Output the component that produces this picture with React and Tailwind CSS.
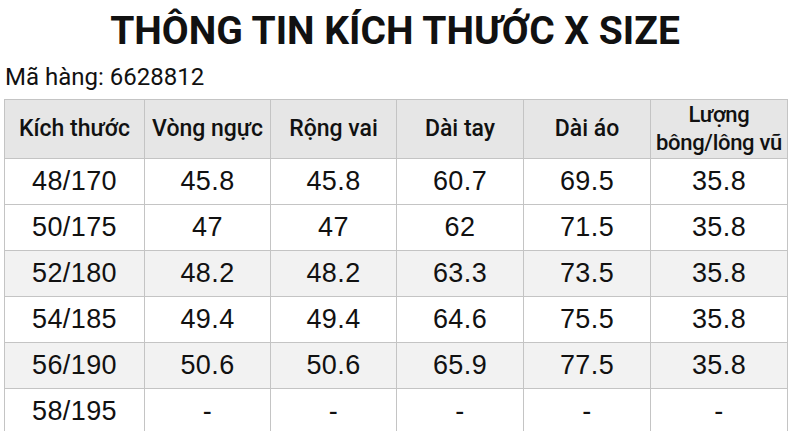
import React from "react";

const rows = [
  ["48/170", "45.8", "45.8", "60.7", "69.5", "35.8"],
  ["50/175", "47", "47", "62", "71.5", "35.8"],
  ["52/180", "48.2", "48.2", "63.3", "73.5", "35.8"],
  ["54/185", "49.4", "49.4", "64.6", "75.5", "35.8"],
  ["56/190", "50.6", "50.6", "65.9", "77.5", "35.8"],
  ["58/195", "-", "-", "-", "-", "-"],
];

export default function App() {
  return (
    <div className="w-[790px] h-[431px] overflow-hidden bg-white text-[#111]">
      <h1
        className="text-center text-[39px] font-bold leading-none pt-[12px] h-[58px]"
        style={{ fontFamily: "Roboto, sans-serif" }}
      >
        THÔNG TIN KÍCH THƯỚC X SIZE
      </h1>
      <div
        className="pl-[5px] text-[24px] leading-[38px] h-[41px]"
        style={{ fontFamily: "Roboto, sans-serif" }}
      >
        Mã hàng: 6628812
      </div>
      <table className="ml-[4px] w-[783px] table-fixed border-collapse">
        <colgroup>
          <col className="w-[140px]" />
          <col className="w-[126px]" />
          <col className="w-[126px]" />
          <col className="w-[127px]" />
          <col className="w-[127px]" />
          <col className="w-[137px]" />
        </colgroup>
        <thead>
          <tr className="h-[59px] bg-[#e6e6e6]">
            {["Kích thước", "Vòng ngực", "Rộng vai", "Dài tay", "Dài áo"].map((h) => (
              <th
                key={h}
                className="border border-[#c4c4c4] text-[23px] font-medium text-center p-0 leading-tight whitespace-nowrap"
                style={{ fontFamily: "Roboto, sans-serif" }}
              >
                {h}
              </th>
            ))}
            <th
              className="border border-[#c4c4c4] text-[22px] font-medium text-center p-0 leading-[28px] tracking-[-0.3px] whitespace-nowrap"
              style={{ fontFamily: "Roboto, sans-serif" }}
            >
              Lượng
              <br />
              bông/lông vũ
            </th>
          </tr>
        </thead>
        <tbody>
          {rows.map((r, i) => (
            <tr
              key={i}
              className={
                i === 2 || i === 4 ? "h-[46px] bg-[#f2f2f2]" : "h-[46px] bg-white"
              }
            >
              {r.map((c, j) => (
                <td
                  key={j}
                  className="border border-[#c4c4c4] text-center text-[27px] p-0 leading-none tracking-[0.4px]"
                  style={{ fontFamily: '"Liberation Sans", Arial, sans-serif' }}
                >
                  {c}
                </td>
              ))}
            </tr>
          ))}
        </tbody>
      </table>
    </div>
  );
}
